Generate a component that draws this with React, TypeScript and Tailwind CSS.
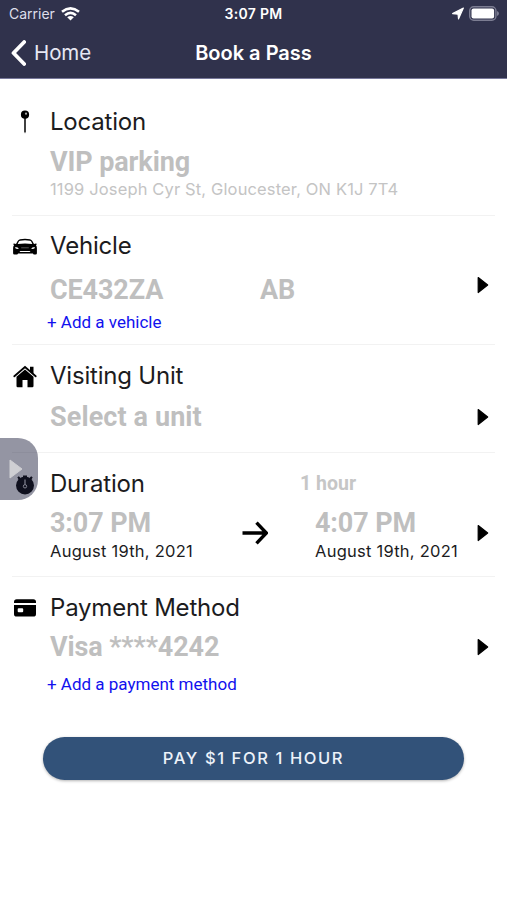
import type { ReactNode } from "react";

const inter = "font-['Inter','Liberation_Sans',sans-serif]";
const roboto = "font-['Roboto','Liberation_Sans',sans-serif]";
const title = `${inter} text-[24px] leading-8 tracking-[-0.2px] text-[#1c1c1e]`;
const valueBase = `${roboto} text-[27px] leading-8 font-bold text-[#bfbfbf]`;
const value = `${valueBase} tracking-[-0.12px]`;
const link = `${roboto} text-[17px] leading-5 text-[#1111ee]`;
const date = "mt-0.5 text-[16.5px] leading-5 tracking-[0.25px] text-[#1c1c1e]";

function Caret() {
  return (
    <svg width="12" height="18" viewBox="0 0 12 18">
      <path d="M1.200 1.500 10.700 9 1.200 16.500Z" fill="#000" stroke="#000" strokeWidth="1.200" strokeLinejoin="round" />
    </svg>
  );
}

function Section({ icon, className, children }: { icon: ReactNode; className: string; children: ReactNode }) {
  return (
    <section className={`mx-3 flex whitespace-nowrap ${className}`}>
      <div className="flex h-8 w-[26px] shrink-0 items-center justify-center">{icon}</div>
      <div className="ml-3 flex grow flex-col">{children}</div>
    </section>
  );
}

const PinIcon = () => (
  <svg width="12" height="24" viewBox="0 0 12 24">
    <path d="M5.200 7h1.600v14.500L6 23.500l-.8-2Z" fill="#111" />
    <circle cx="6" cy="4.700" r="4.100" fill="#000" />
    <circle cx="7" cy="3.700" r="1.100" fill="#aaa" />
  </svg>
);

const CarIcon = () => (
  <svg width="24" height="17" viewBox="0 0 24 17">
    <path
      fillRule="evenodd"
      d="M7 1.200Q12 .4 17 1.200 18.600 1.500 19.500 3.200L21 6l2-.5q.8 0 .7.8l-.7.9q.9 1 .9 2.800v5.200q0 1.300-1.300 1.300h-1.400q-1.200 0-1.200-1H5q0 1-1.200 1H1.400Q.1 16.500.1 15.200V10Q.1 8.200 1 7.200L.3 6.300Q.2 5.500 1 5.500L3 6 4.500 3.200Q5.400 1.500 7 1.200ZM7 2.700Q6.200 2.900 5.700 3.800L4.700 6Q12 5.100 19.300 6L18.300 3.800Q17.800 2.900 17 2.700 12 2 7 2.700ZM2.300 9Q1.900 10.900 4.500 10.900L5.900 10.600Q5 9 2.300 9ZM21.700 9Q19 9 18.100 10.600L19.500 10.900Q22.100 10.900 21.700 9ZM6.500 13 7.300 14h9.400L17.500 13Z"
      fill="#000"
    />
    <path d="M8.200 9.800h7.600" stroke="#777" strokeWidth=".7" />
  </svg>
);

const HomeIcon = () => (
  <svg width="24" height="23" viewBox="0 0 24 23">
    <path d="M3.500 11.700 12 4.500l8.500 7.200V21q0 1.200-1.200 1.200H14.500V15h-5v7.200H4.700Q3.500 22.200 3.500 21Z" fill="#000" />
    <path d="M1.300 11.300 12 2l10.700 9.300" fill="none" stroke="#000" strokeWidth="1.800" strokeLinecap="round" />
    <path d="M17 1.800h3.500v7.200l-3.500-2.800Z" fill="#000" />
  </svg>
);

const TimerIcon = () => (
  <svg width="20" height="21" viewBox="0 0 20 21">
    <circle cx="10" cy="11.500" r="9" fill="#000" />
    <path d="M8 1.500h4v3H8ZM2.300 3.500l1.500-1.300 2 2L4 6ZM17.700 3.500l-1.500-1.300-2 2L16 6Z" fill="#000" />
    <path d="M10 5.500v5" stroke="#ddd" strokeWidth="1.200" />
    <circle cx="10" cy="12.300" r="1.700" fill="none" stroke="#ddd" strokeWidth="1" />
  </svg>
);

const CardIcon = () => (
  <svg width="22" height="18" viewBox="0 0 22 18">
    <path d="M0 4.100V3Q0 .3 2.700.3h16.600Q22 .3 22 3v1.100Z" fill="#000" />
    <path fillRule="evenodd" d="M0 6.100h22v8.800q0 2.700-2.700 2.700H2.700Q0 17.600 0 14.900ZM4.700 9.300Q3.700 9.300 3.700 10.300v2q0 1 1 1h3.500q1 0 1-1v-2q0-1-1-1Z" fill="#000" />
  </svg>
);

export default function App() {
  return (
    <div className={`relative h-[900px] w-[507px] overflow-hidden bg-white ${inter}`}>
      <header className="flex h-[79px] flex-col border-b border-[#77789a] bg-[#30324c] whitespace-nowrap text-white">
        <div className="grid h-7 grid-cols-[1fr_auto_1fr] items-center px-2 text-[14px]">
          <div className="-mt-px flex items-center gap-1.5 pl-px">
            <span className="text-[#dedfeb]">Carrier</span>
            <svg width="19" height="14" viewBox="0 0 19 14" fill="none" stroke="#fff" strokeWidth="2.600">
              <path d="M1 4.800Q9.500-2 18 4.800M4 8.200Q9.500 3.600 15 8.200" />
              <path d="M6.200 10.300Q9.500 7.600 12.800 10.300L9.500 13.600Z" fill="#fff" stroke="none" />
            </svg>
          </div>
          <span className="-mt-0.5 font-semibold tracking-[0.3px]">3:07 PM</span>
          <div className="-mt-0.5 flex items-center justify-end gap-[5px]">
            <svg width="12" height="13" viewBox="0 0 12 13">
              <path d="M.6 6.600 11.400 1 6.500 12 6 7.200Z" fill="#fff" stroke="#fff" strokeWidth="1.100" strokeLinejoin="round" />
            </svg>
            <svg width="30" height="15" viewBox="0 0 30 15">
              <rect x=".7" y=".7" width="26.200" height="13.600" rx="4" fill="none" stroke="#7c7d92" strokeWidth="1.400" />
              <rect x="2.500" y="2.500" width="22.600" height="10" rx="2" fill="#fff" />
              <path d="M28 5q2 .8 2 2.500t-2 2.500Z" fill="#7c7d92" />
            </svg>
          </div>
        </div>
        <div className="grid h-[50px] grid-cols-[1fr_auto_1fr] items-center px-[11px]">
          <div className="flex items-center gap-2">
            <svg width="15" height="26" viewBox="0 0 15 26"><path d="M13.200 2 2.500 13l10.700 11" fill="none" stroke="#fff" strokeWidth="3.800" strokeLinecap="round" strokeLinejoin="round" /></svg>
            <span className="text-[20.5px] tracking-[-0.1px] text-[#e6e7f3]">Home</span>
          </div>
          <h1 className="text-[20px] font-semibold">Book a Pass</h1>
          <div />
        </div>
      </header>

      <main className="flex flex-col">
        <Section className="h-[137px] border-b border-[#f2f2f2] pt-[27px]" icon={<PinIcon />}>
          <h2 className={title}>Location</h2>
          <p className={`mt-2 ${value}`}>VIP parking</p>
          <p className="mt-px text-[16.5px] leading-5 tracking-[0.14px] text-[#c4c4c4]">1199 Joseph Cyr St, Gloucester, ON K1J 7T4</p>
        </Section>

        <Section className="h-[129px] border-b border-[#f2f2f2] pt-3.5" icon={<CarIcon />}>
          <h2 className={title}>Vehicle</h2>
          <div className="mt-3 flex h-8 items-center">
            <span className={`w-[210px] ${value}`}>CE432ZA</span>
            <span className={`grow ${value}`}>AB</span>
            <span className="-mt-2.5 mr-1.5"><Caret /></span>
          </div>
          <p className={`mt-1.5 -ml-[3px] ${link}`}>+ Add a vehicle</p>
        </Section>

        <Section className="h-[108px] border-b border-[#f2f2f2] pt-[15px]" icon={<HomeIcon />}>
          <h2 className={title}>Visiting Unit</h2>
          <div className="mt-[9px] flex h-8 items-center justify-between">
            <span className={`tracking-[0.1px] ${valueBase}`}>Select a unit</span>
            <span className="mr-1.5"><Caret /></span>
          </div>
        </Section>

        <Section className="h-[124px] border-b border-[#f2f2f2] pt-[15px]" icon={<TimerIcon />}>
          <div className="flex items-center">
            <h2 className={`w-[250px] ${title}`}>Duration</h2>
            <span className={`${roboto} text-[19.5px] leading-8 font-bold text-[#c6c6c6]`}>1 hour</span>
          </div>
          <div className="mt-[7px] flex">
            <div className="w-[192px]">
              <p className={value}>3:07 PM</p>
              <p className={date}>August 19th, 2021</p>
            </div>
            <svg className="mt-3.5" width="26" height="24" viewBox="0 0 26 24" fill="none" stroke="#000" strokeWidth="3.400">
              <path d="M.5 12H24M14.500 1.700 24.300 12 14.500 22.300" />
            </svg>
            <div className="ml-[47px] grow">
              <p className={value}>4:07 PM</p>
              <p className={date}>August 19th, 2021</p>
            </div>
            <span className="mt-[17px] mr-1.5"><Caret /></span>
          </div>
        </Section>

        <Section className="h-[160px] pt-[15px]" icon={<CardIcon />}>
          <h2 className={title}>Payment Method</h2>
          <div className="mt-[7px] flex h-8 items-center justify-between">
            <span className={value}>Visa ****4242</span>
            <span className="mr-1.5"><Caret /></span>
          </div>
          <p className={`mt-[11px] -ml-[3px] ${link}`}>+ Add a payment method</p>
        </Section>

        <button className="mx-[43px] h-[43px] rounded-full bg-[#325279] text-[16.5px] font-medium tracking-[1.6px] text-[#edf2fa] shadow-[0_1px_3px_rgba(0,0,0,0.3)]">
          PAY $1 FOR 1 HOUR
        </button>
      </main>

      <div className="absolute top-[438px] left-0 flex h-[62px] w-[38px] items-center rounded-r-[20px] bg-[#20223f]/48 pl-[9px]">
        <svg width="15" height="20" viewBox="0 0 15 20"><path d="M1 1 13 10 1 19Z" fill="#cfcfd3" stroke="#cfcfd3" strokeLinejoin="round" /></svg>
      </div>
    </div>
  );
}
